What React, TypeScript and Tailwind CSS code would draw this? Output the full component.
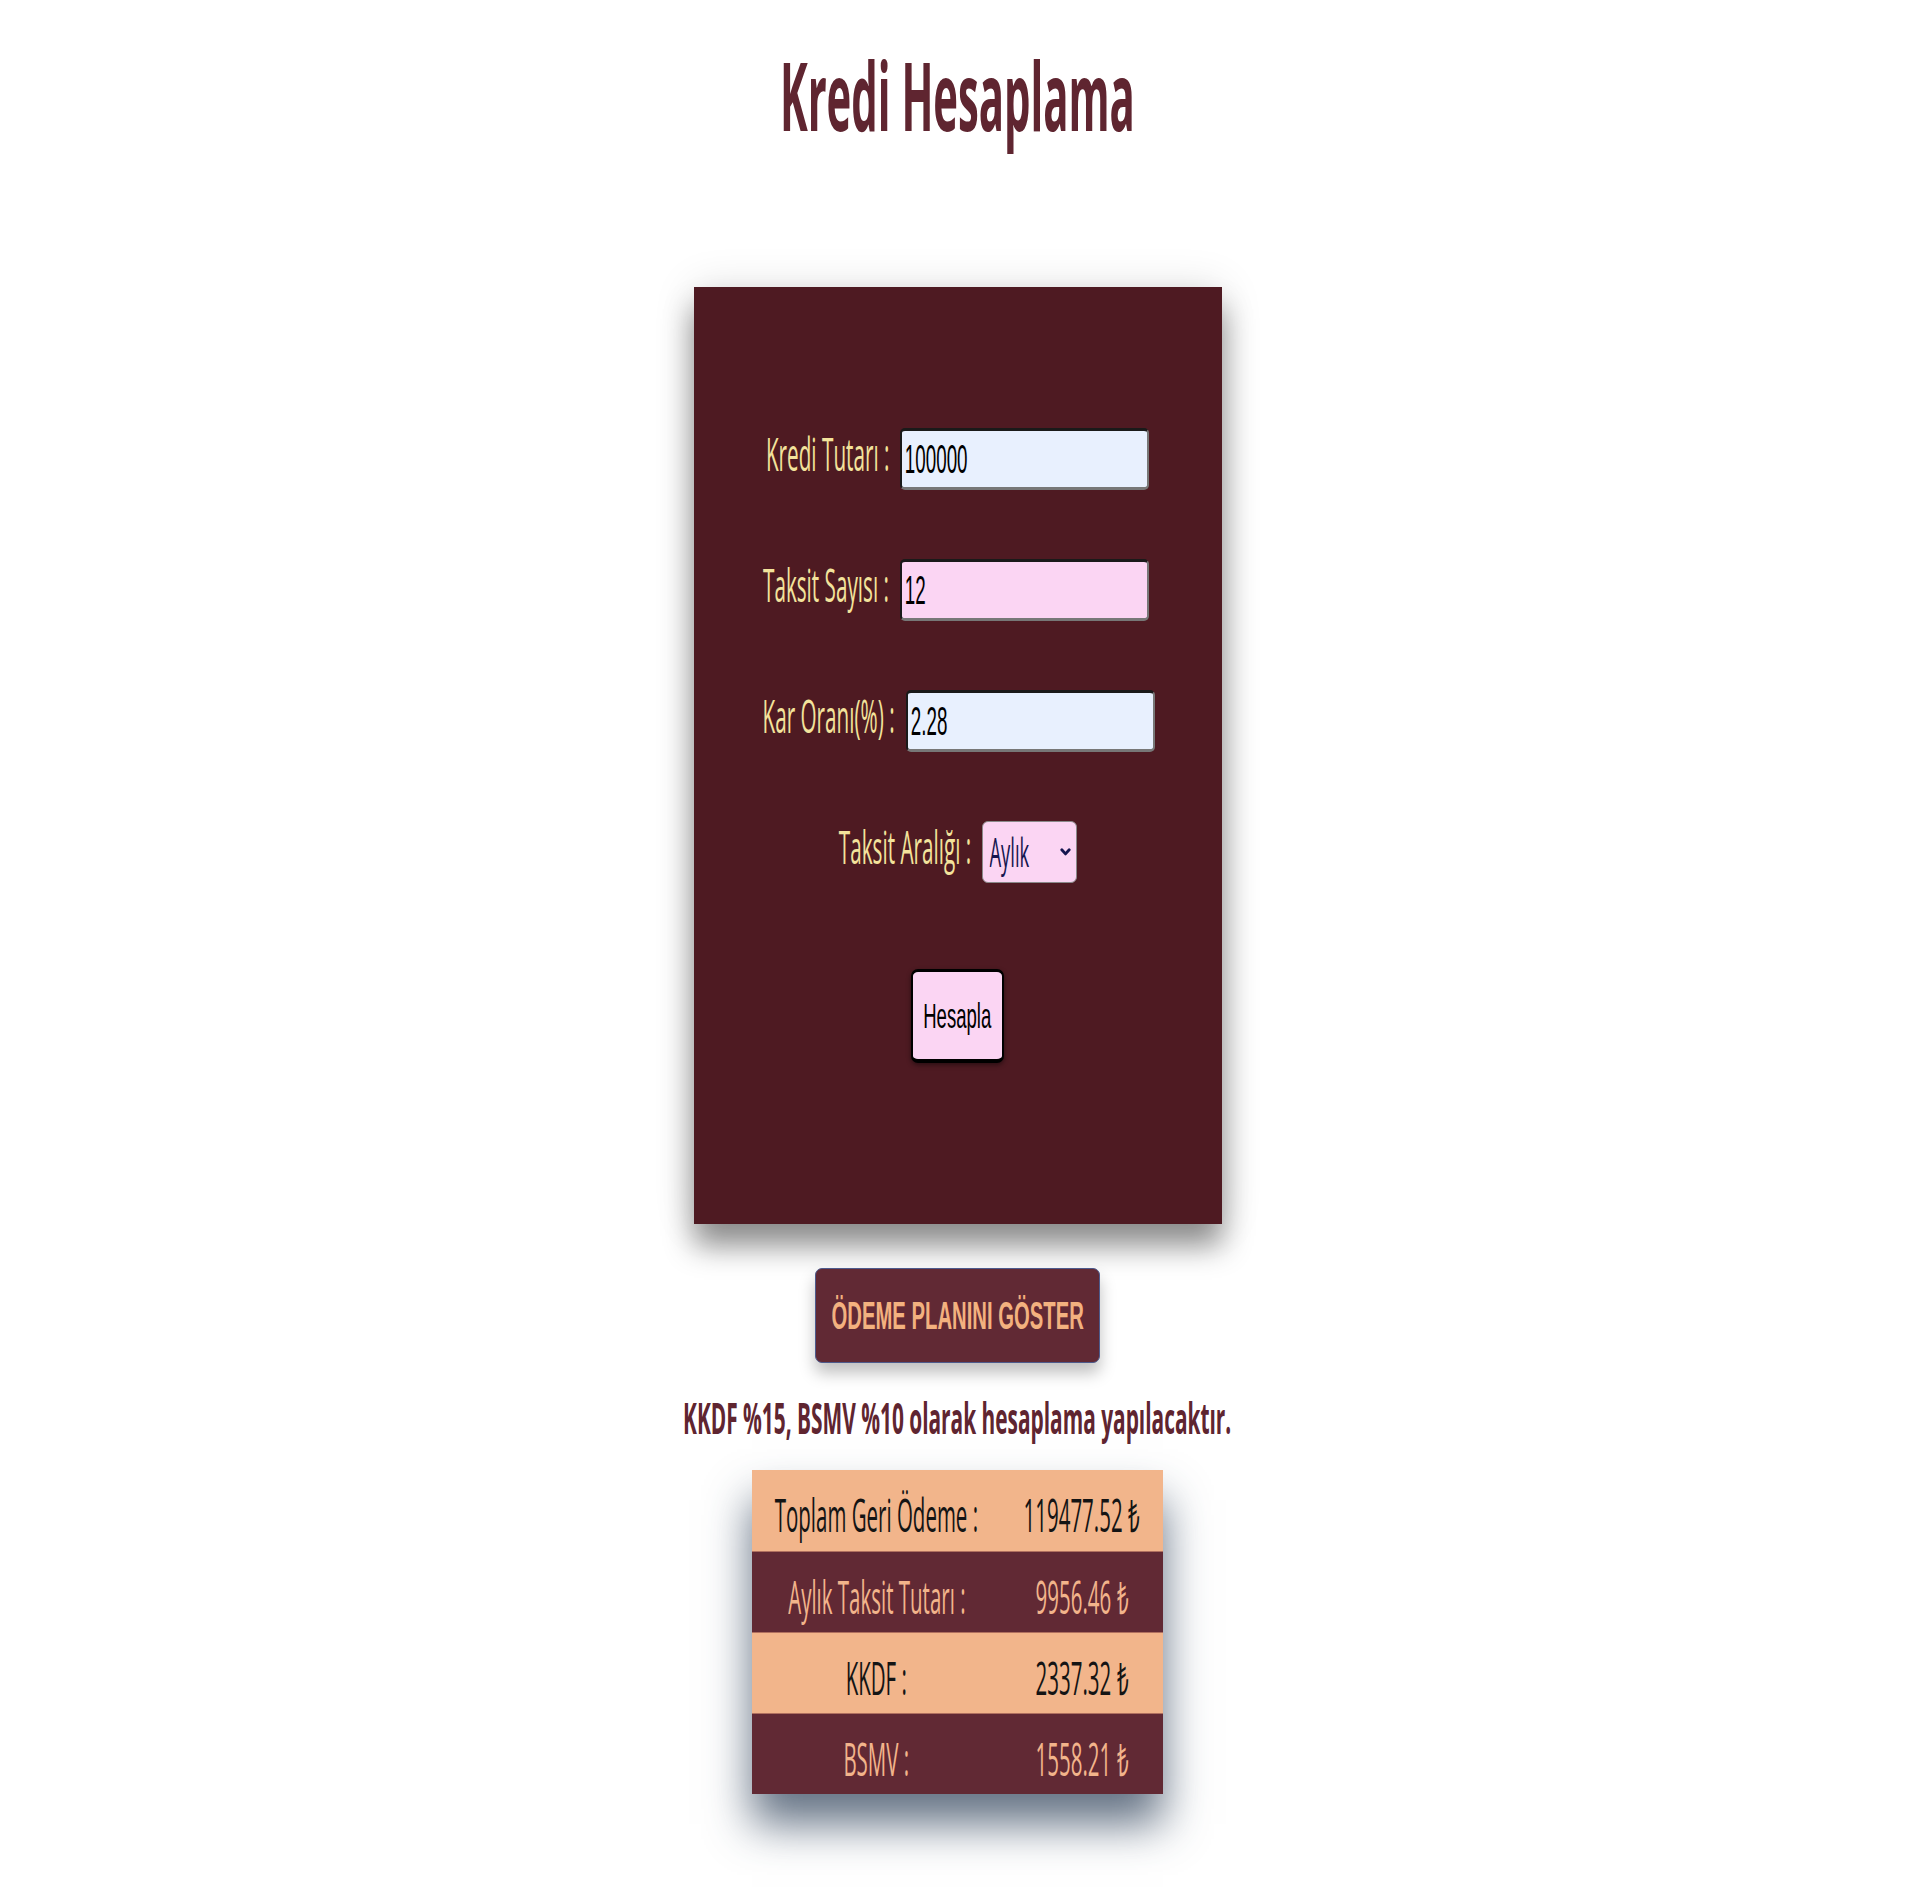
import React from "react";

// satır tipleri
type Row = {
  label: string;
  value: string;
  dark: boolean;
};

const rows: Row[] = [
  { label: "Toplam Geri Ödeme :", value: "119477.52 ₺", dark: false },
  { label: "Aylık Taksit Tutarı :", value: "9956.46 ₺", dark: true },
  { label: "KKDF :", value: "2337.32 ₺", dark: false },
  { label: "BSMV :", value: "1558.21 ₺", dark: true },
];

function Label({ text, width }: { text: string; width: string }) {
  return (
    <div className={`${width} mb-[12px] flex justify-end`}>
      <span className="shrink-0 origin-right scale-x-[0.45] whitespace-nowrap text-[46px] leading-[46px] text-[#f3e39c]">
        {text}
      </span>
    </div>
  );
}

function Field({ value, bg }: { value: string; bg: string }) {
  return (
    <div
      className={`${bg} flex h-[62px] w-[249px] items-center overflow-hidden rounded-[5px] border-x-2 border-y-[3px] border-t-[#1a1a1a] border-l-[#1a1a1a] border-b-[#777777] border-r-[#777777]`}
    >
      <input
        defaultValue={value}
        className="w-[520px] shrink-0 origin-left scale-x-[0.47] bg-transparent pl-[6px] font-['Liberation_Sans',Arial,sans-serif] text-[40px] text-black outline-none"
      />
    </div>
  );
}

export default function App() {
  return (
    <div className="flex min-h-[1900px] flex-col items-center bg-white font-['Open_Sans',sans-serif]">
      {/* Başlık */}
      <h1 className="mt-[47px] flex h-[95px] justify-center text-[95px] font-bold leading-[95px] text-[#5f2530]">
        <span className="inline-block shrink-0 scale-x-[0.44] whitespace-nowrap">Kredi Hesaplama</span>
      </h1>

      {/* Form kartı */}
      <form className="mt-[145px] flex w-[528px] flex-col items-center bg-[#4e1a22] pb-[161px] pt-[141px] shadow-[0_22px_28px_rgba(0,0,0,0.42),0_0_40px_rgba(0,0,0,0.12)]">
        <div className="flex flex-col items-center gap-[69px]">
          <div className="flex items-center gap-[11px]">
            <Label text="Kredi Tutarı :" width="w-[123px]" />
            <Field value="100000" bg="bg-[#e8f0fe]" />
          </div>
          <div className="flex items-center gap-[11px]">
            <Label text="Taksit Sayısı :" width="w-[123px]" />
            <Field value="12" bg="bg-[#fbd5f3]" />
          </div>
          <div className="flex items-center gap-[11px]">
            <Label text="Kar Oranı(%) :" width="w-[134px]" />
            <Field value="2.28" bg="bg-[#e8f0fe]" />
          </div>
          <div className="flex items-center gap-[11px]">
            <Label text="Taksit Aralığı :" width="w-[133px]" />
            <div className="relative flex h-[62px] w-[95px] items-center overflow-hidden rounded-[6px] border border-[#8a8a8a] bg-[#fbd5f3]">
              <select
                defaultValue="aylik"
                className="w-[180px] shrink-0 origin-left scale-x-[0.46] appearance-none bg-transparent pl-[14px] text-[40px] text-[#15154f] outline-none"
              >
                <option value="aylik">Aylık</option>
                <option value="yillik">Yıllık</option>
              </select>
              <svg
                className="absolute right-[5px] top-1/2 -translate-y-1/2"
                width="11"
                height="9"
                viewBox="0 0 11 9"
                fill="none"
              >
                <path d="M1.8 2.2 L5.5 6.4 L9.2 2.2" stroke="#15154f" strokeWidth="2.8" strokeLinecap="round" strokeLinejoin="round" />
              </svg>
            </div>
          </div>
        </div>

        <button
          type="button"
          className="mt-[86px] flex h-[94px] w-[93px] items-center justify-center rounded-[7px] border-x-2 border-b-4 border-t-[3px] border-black bg-[#fbd5f3] shadow-[0_2px_5px_rgba(0,0,0,0.45)]"
        >
          <span className="shrink-0 scale-x-[0.53] whitespace-nowrap font-['Liberation_Sans',Arial,sans-serif] text-[35px] leading-[35px] text-black">
            Hesapla
          </span>
        </button>
      </form>

      {/* Ödeme planı */}
      <button
        type="button"
        className="mt-[44px] flex h-[95px] w-[285px] items-center justify-center rounded-[7px] border border-[#4d5a8c] bg-[#612934] shadow-[0_10px_16px_rgba(0,0,0,0.25)]"
      >
        <span className="shrink-0 scale-x-[0.52] whitespace-nowrap font-['Liberation_Sans',Arial,sans-serif] text-[39px] font-bold leading-[39px] text-[#f3b17f]">
          ÖDEME PLANINI GÖSTER
        </span>
      </button>

      <p className="mt-[33px] flex h-[43px] justify-center text-[43px] font-bold leading-[43px] text-[#5f2530]">
        <span className="shrink-0 scale-x-[0.485] whitespace-nowrap">KKDF %15, BSMV %10 olarak hesaplama yapılacaktır.</span>
      </p>

      {/* Sonuç tablosu */}
      <div className="mt-[31px] w-[411px] shadow-[0_30px_42px_rgba(40,60,85,0.72)]">
        {rows.map((r, i) => (
          <div
            key={r.label}
            className={`grid h-[81px] grid-cols-[249px_162px] items-center pt-[8px] text-[45px] leading-[45px] ${
              r.dark ? "bg-[#612934] text-[#f2b48b]" : "bg-[#f2b58b] text-[#141414]"
            } ${i > 0 ? "border-t border-[#b0705f]" : ""}`}
          >
            <div className="flex justify-center">
              <span className="shrink-0 scale-x-[0.455] whitespace-nowrap">{r.label}</span>
            </div>
            <div className="flex justify-center">
              <span className="shrink-0 scale-x-[0.455] whitespace-nowrap">{r.value}</span>
            </div>
          </div>
        ))}
      </div>
    </div>
  );
}
